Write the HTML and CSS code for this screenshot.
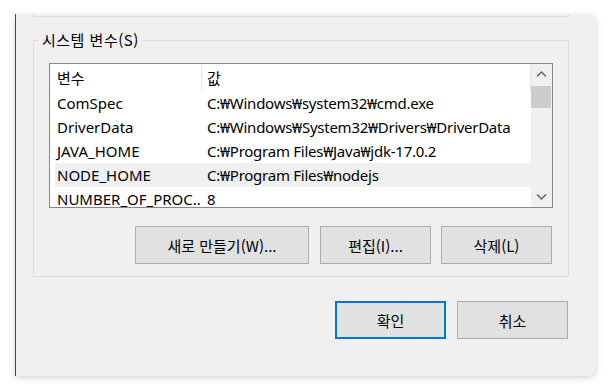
FILE: index.html
```html
<!DOCTYPE html>
<html lang="ko">
<head>
<meta charset="utf-8">
<title>환경 변수</title>
<link rel="stylesheet" href="styles.css">
</head>
<body>
<div class="screen">
  <div class="dialog">
    <div class="prev-group"></div>
    <div class="group">
      <span class="group-label">시스템 변수(S)</span>
      <div class="listview">
        <div class="list-main">
          <div class="list-header">
            <div class="hcell hcell-name">변수</div>
            <div class="hcell hcell-value">값</div>
          </div>
          <div class="row"><div class="cell-name">ComSpec</div><div class="cell-value">C:₩Windows₩system32₩cmd.exe</div></div>
          <div class="row"><div class="cell-name">DriverData</div><div class="cell-value">C:₩Windows₩System32₩Drivers₩DriverData</div></div>
          <div class="row"><div class="cell-name">JAVA_HOME</div><div class="cell-value">C:₩Program Files₩Java₩jdk-17.0.2</div></div>
          <div class="row row-hot"><div class="cell-name">NODE_HOME</div><div class="cell-value">C:₩Program Files₩nodejs</div></div>
          <div class="row"><div class="cell-name">NUMBER_OF_PROC...</div><div class="cell-value">8</div></div>
        </div>
        <div class="scrollbar">
          <div class="sb-btn">
            <svg width="21" height="21" viewBox="0 0 21 21"><polyline points="6,12.5 10.5,8 15,12.5" fill="none" stroke="#606060" stroke-width="1.4"/></svg>
          </div>
          <div class="sb-track"><div class="sb-thumb"></div></div>
          <div class="sb-btn">
            <svg width="21" height="21" viewBox="0 0 21 21"><polyline points="6,8.5 10.5,13 15,8.5" fill="none" stroke="#606060" stroke-width="1.4"/></svg>
          </div>
        </div>
      </div>
      <div class="btn-row">
        <button class="btn btn-wide">새로 만들기(W)...</button>
        <button class="btn">편집(I)...</button>
        <button class="btn">삭제(L)</button>
      </div>
    </div>
    <div class="dialog-buttons">
      <button class="btn btn-default">확인</button>
      <button class="btn">취소</button>
    </div>
  </div>
</div>
</body>
</html>
```

FILE: styles.css
```css
html, body {
  margin: 0;
  padding: 0;
  background: #ffffff;
}

body {
  font-family: "Noto Sans", "Noto Sans CJK KR", sans-serif;
  font-size: 15px;
  color: #000000;
}

.screen {
  width: 610px;
  height: 391px;
  box-sizing: border-box;
  padding: 14px 0 0 15px;
  overflow: hidden;
}

.dialog {
  width: 581px;
  height: 362px;
  box-sizing: border-box;
  background: #f0f0f0;
  border-left: 1px solid #4a4a4a;
  border-radius: 0 8px 8px 0;
  box-shadow: 0 2px 6px rgba(0, 0, 0, 0.16), 0 0 2px rgba(0, 0, 0, 0.06);
  padding: 0 27px 0 17px;
  display: flex;
  flex-direction: column;
}

.prev-group {
  height: 2px;
  border: 1px solid #dcdcdc;
  border-top: none;
}

.group {
  position: relative;
  margin-top: 23px;
  border: 1px solid #dcdcdc;
  padding: 22px 15px 12px 15px;
}

.group-label {
  position: absolute;
  left: 5px;
  top: -11px;
  padding: 0 3px;
  line-height: 20px;
  letter-spacing: 0.5px;
  background: #f0f0f0;
  font-family: "Noto Sans CJK KR", sans-serif;
}

.listview {
  height: 145px;
  box-sizing: border-box;
  border: 1px solid #828790;
  background: #ffffff;
  display: flex;
  overflow: hidden;
}

.list-main {
  flex: 1;
  overflow: hidden;
}

.list-header {
  display: flex;
  height: 27px;
}

.hcell {
  box-sizing: border-box;
  height: 25px;
  margin-top: 1px;
  line-height: 25px;
  border-right: 1px solid #e5e5e5;
  font-family: "Noto Sans CJK KR", sans-serif;
}

.hcell-name {
  width: 152px;
  padding-left: 7px;
}

.hcell-value {
  flex: 1;
  padding-left: 5px;
}

.row {
  display: flex;
  height: 24px;
  line-height: 24px;
  margin-left: 5px;
  white-space: nowrap;
}

.row-hot {
  background: #f0f0f0;
}

.cell-name {
  width: 146px;
  box-sizing: border-box;
  padding-left: 2px;
  overflow: hidden;
}

.cell-value {
  flex: 1;
  padding-left: 6px;
  overflow: hidden;
  letter-spacing: -0.25px;
}

.scrollbar {
  width: 21px;
  background: #f0f0f0;
  display: flex;
  flex-direction: column;
}

.sb-btn {
  height: 21px;
  display: flex;
}

.sb-track {
  flex: 1;
  padding-top: 1px;
}

.sb-thumb {
  height: 22px;
  margin: 0 1px 0 0;
  background: #cdcdcd;
}

.btn-row {
  display: flex;
  justify-content: flex-end;
  gap: 10px;
  margin-top: 18px;
  padding-right: 1px;
}

.btn {
  width: 111px;
  height: 38px;
  box-sizing: border-box;
  border: 1px solid #adadad;
  background: #e1e1e1;
  font-family: "Noto Sans CJK KR", sans-serif;
  font-size: 15px;
  color: #000000;
  padding: 0;
  margin: 0;
}

.btn-wide {
  width: 174px;
  margin-right: 1px;
}

.btn-default {
  border: 2px solid #0078d7;
}

.dialog-buttons {
  display: flex;
  justify-content: flex-end;
  gap: 11px;
  margin-top: 24px;
  padding-right: 1px;
}
```
